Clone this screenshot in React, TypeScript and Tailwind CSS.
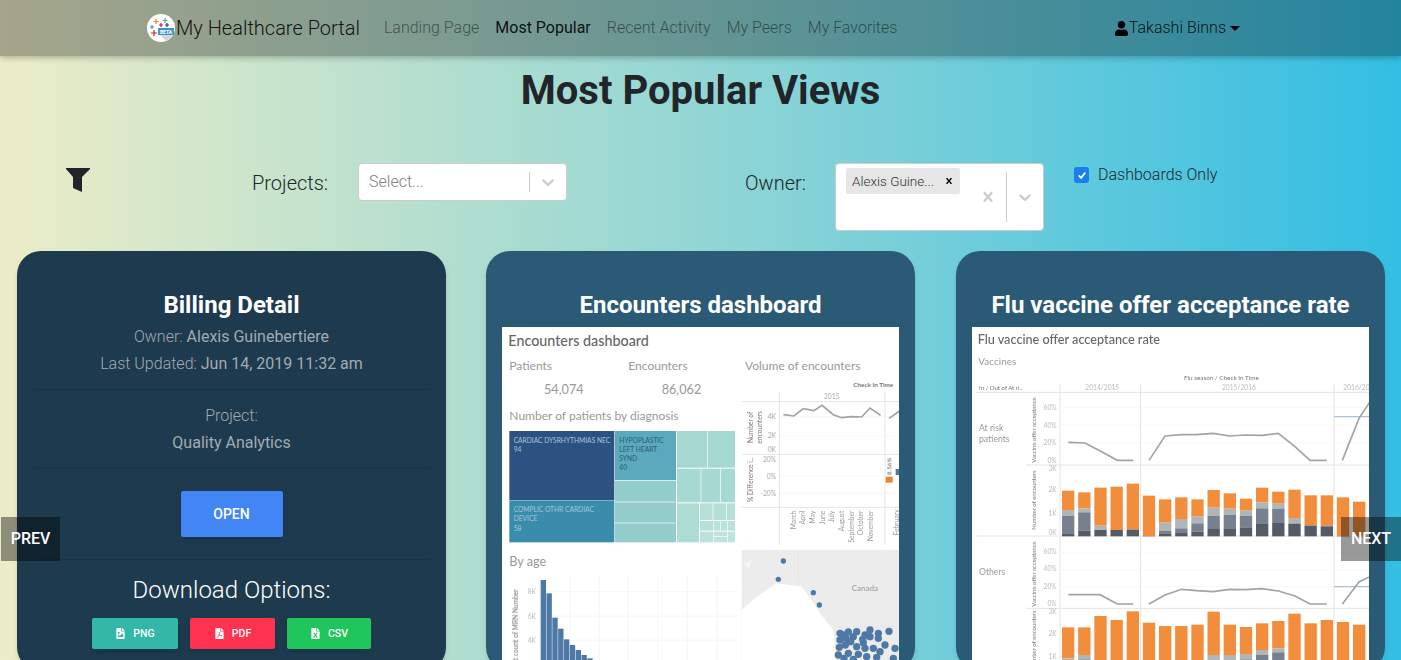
import { FaFileExcel, FaFileImage, FaFilePdf, FaUser } from "react-icons/fa";

const navLinks = ["Landing Page", "Most Popular", "Recent Activity", "My Peers", "My Favorites"];

// charts below are drawn in 3x coordinates, viewBox starts where the thumbnail starts
const treemap = [
  [58, 333, 315, 207, "#2c5282"],
  [58, 541, 315, 126, "#3a8cac"],
  [375, 333, 183, 147, "#5aa9bd"],
  [375, 482, 183, 63, "#92cdcb"],
  [375, 547, 183, 61, "#92cdcb"],
  [375, 610, 183, 57, "#92cdcb"],
  [561, 333, 91, 110, "#a3d7d0"],
  [654, 333, 81, 110, "#a3d7d0"],
  [561, 446, 71, 101, "#a6d9d1"],
  [634, 446, 57, 101, "#a6d9d1"],
  [693, 446, 42, 101, "#a6d9d1"],
  [561, 550, 66, 117, "#addcd3"],
  [630, 550, 38, 50, "#b5e0d6"],
  [670, 550, 38, 50, "#b5e0d6"],
  [710, 550, 25, 50, "#b5e0d6"],
  [630, 603, 40, 29, "#b5e0d6"],
  [672, 603, 18, 29, "#b9e2d8"],
  [692, 603, 20, 29, "#b9e2d8"],
  [714, 603, 21, 29, "#b9e2d8"],
  [630, 635, 40, 32, "#b9e2d8"],
  [672, 635, 40, 13, "#bde4da"],
  [672, 650, 40, 17, "#bde4da"],
  [714, 635, 21, 32, "#bde4da"],
] as const;

const months = ["March", "April", "May", "June", "July", "August", "September", "October", "November"];
const ageBars = [780, 820, 893, 926, 958, 975, 990, 1005, 1015];
const usDots = [
  [1050, 940], [1075, 936], [1100, 935], [1125, 945], [1140, 930], [1165, 940], [1197, 934], [1050, 960],
  [1068, 955], [1090, 950], [1118, 958], [1165, 955], [1048, 982], [1066, 975], [1100, 980], [1125, 985],
  [1150, 985], [1185, 975], [1170, 995], [1215, 985], [1045, 1005], [1075, 1000], [1105, 1003], [1130, 1010],
  [1160, 1012], [1210, 1015], [1062, 1015], [1090, 1018], [1120, 968], [1140, 950], [1060, 945], [1082, 965],
];

// orange top, light grey top, mid grey top, dark top
const riskBars = [
  [512, 570, 587, 640], [517, 565, 577, 632], [503, 617, 630, 630], [500, 630, 630, 630], [491, 628, 628, 630],
  [527, 648, 648, 648], [538, 608, 633, 640], [532, 597, 625, 637], [538, 590, 610, 635], [510, 563, 587, 627],
  [520, 566, 585, 625], [536, 572, 587, 622], [503, 547, 565, 612], [515, 551, 566, 607], [509, 594, 610, 612],
  [526, 616, 616, 617], [526, 617, 617, 619], [532, 648, 648, 648], [545, 648, 648, 648], [540, 648, 648, 648],
];
const otherBars = [
  [922, 1015, 1030], [922, 1005, 1018], [888, 1040, 1040], [900, 1040, 1040], [874, 1040, 1040],
  [908, 1040, 1040], [918, 1040, 1040], [918, 1040, 1040], [914, 1040, 1040], [875, 1005, 1040],
  [914, 1005, 1040], [921, 1002, 1018], [910, 990, 1005], [903, 985, 997], [881, 1040, 1040],
  [910, 1040, 1040], [900, 1040, 1040], [906, 1040, 1040], [914, 1040, 1040], [910, 1040, 1040],
];

const fluLines = [
  "325,367 375,369 425,395 472,421 520,421",
  "567,421 615,348 665,344 710,344 760,340 808,348 858,345 908,346 955,340 1005,380 1050,421 1100,421",
  "1147,421 1197,295 1230,245",
  "325,824 420,824 472,852 520,852",
  "567,852 615,825 665,808 710,812 760,815 808,808 858,809 905,806 955,813 1005,828 1050,852 1100,852",
  "1147,852 1197,786 1230,770",
];

function EncountersChart() {
  return (
    <svg viewBox="36 21 1191 1020" className="block w-[397px] h-[340px] font-['Lato',sans-serif] blur-[0.6px]">
      <rect x="36" y="21" width="1191" height="1020" fill="#fff" />
      <text x="55" y="78" fontSize="43" fontWeight="500" fill="#666">Encounters dashboard</text>
      <g fontSize="36" fill="#999">
        <text x="58" y="151">Patients</text>
        <text x="415" y="151">Encounters</text>
        <text x="765" y="151">Volume of encounters</text>
        <text x="58" y="300">Number of patients by diagnosis</text>
        <text x="58" y="738" fontSize="38">By age</text>
        <text x="162" y="222" fontSize="38">54,074</text>
        <text x="515" y="222" fontSize="38">86,062</text>
      </g>

      {treemap.map(([x, y, w, h, fill]) => (
        <rect key={`${x}-${y}`} x={x} y={y} width={w} height={h} fill={fill} />
      ))}
      <g fontSize="20" fill="#a9c4d6">
        <text x="71" y="368">CARDIAC DYSRHYTHMIAS NEC</text>
        <text x="71" y="395">94</text>
        <text x="71" y="575">COMPLIC OTHR CARDIAC</text>
        <text x="71" y="603">DEVICE</text>
        <text x="71" y="632">58</text>
      </g>
      <g fontSize="20" fill="#2d5d70">
        <text x="388" y="368">HYPOPLASTIC</text>
        <text x="388" y="395">LEFT HEART</text>
        <text x="388" y="424">SYND</text>
        <text x="388" y="451">40</text>
      </g>

      <g stroke="#e4e4e4" strokeWidth="3">
        <path d="M868 215V675M1185 215V675M755 245H1227M755 403H1227M755 562H1227" fill="none" />
      </g>
      <path d="M870 290H1227M870 347H1227M870 468H1227M870 520H1227" stroke="#f3f3f3" strokeWidth="2" fill="none" />
      <text x="1090" y="202" fontSize="19" fontWeight="700" fill="#777">Check In Time</text>
      <text x="1002" y="237" fontSize="20" fill="#aaa">2015</text>
      <polyline points="880,284 912,288 940,266 972,272 996,256 1030,284 1055,293 1085,290 1115,291 1140,264 1172,286" fill="none" stroke="#a3a3a3" strokeWidth="5" />
      <polyline points="1197,295 1230,272" fill="none" stroke="#a3a3a3" strokeWidth="5" />
      <g fontSize="20" fill="#aaa" textAnchor="end">
        <text x="858" y="297">4K</text>
        <text x="858" y="354">2K</text>
        <text x="858" y="397">0K</text>
        <text x="858" y="425">20%</text>
        <text x="858" y="477">0%</text>
        <text x="858" y="529">-20%</text>
      </g>
      <g fontSize="20" fill="#777" textAnchor="middle">
        <text transform="translate(790 322) rotate(-90)">Number of</text>
        <text transform="translate(817 322) rotate(-90)">encounters</text>
        <text transform="translate(790 480) rotate(-90)">% Difference i..</text>
      </g>
      <g fontSize="20" fill="#999" textAnchor="end">
        {months.map((month, i) => (
          <text key={month} transform={`translate(${917 + i * 29} 572) rotate(-90)`}>{month}</text>
        ))}
        <text transform="translate(1226 568) rotate(-90)">February</text>
      </g>
      <rect x="1187" y="470" width="21" height="18" fill="#ea8534" />
      <rect x="1217" y="447" width="12" height="18" fill="#4e79a7" />
      <text transform="translate(1204 465) rotate(-90)" fontSize="19" fill="#666">8.56%</text>

      <path d="M150 765V1040M240 765V1040M328 765V1040M415 765V1040M503 765V1040M592 765V1040M682 765V1040M145 815H745M145 888H745M145 960H745" stroke="#f1f1f1" strokeWidth="2" fill="none" />
      {ageBars.map((top, i) => (
        <rect key={i} x={152 + i * 17.5} y={top} width="16" height={1041 - top} fill="#4e79a7" />
      ))}
      <g fontSize="20" fill="#bbb" textAnchor="end">
        <text x="138" y="823">8K</text>
        <text x="138" y="896">6K</text>
        <text x="138" y="968">4K</text>
      </g>
      <text transform="translate(84 1082) rotate(-90)" fontSize="20" fill="#777">Distinct count of MRN Number</text>

      <rect x="755" y="690" width="472" height="351" fill="#ececec" />
      <path d="M755 870L800 830L860 790L935 800L965 840L990 880L1030 930L1040 1041H755Z" fill="#fff" />
      <path d="M925 690V780M1035 920H1227M1065 880L1130 820" stroke="#e2e2e2" strokeWidth="2" fill="none" />
      <path d="M760 730l25 -10l-8 25z" fill="#f7f7f7" />
      <text x="1085" y="814" fontSize="24" fill="#999">Canada</text>
      {[[880, 723], [865, 778], [970, 818], [988, 855]].map(([cx, cy]) => (
        <circle key={cx} cx={cx} cy={cy} r="8" fill="#4e79a7" />
      ))}
      {usDots.map(([cx, cy], i) => (
        <circle key={i} cx={cx} cy={cy} r="11" fill="#4e79a7" />
      ))}
    </svg>
  );
}

function FluChart() {
  return (
    <svg viewBox="36 21 1191 1020" className="block w-[397px] h-[340px] font-['Lato',sans-serif] blur-[0.6px]">
      <rect x="36" y="21" width="1191" height="1020" fill="#fff" />
      <text x="53" y="71" fontSize="38" fontWeight="500" fill="#666">Flu vaccine offer acceptance rate</text>
      <text x="55" y="135" fontSize="30" fill="#999">Vaccines</text>
      <text x="672" y="179" fontSize="19" fill="#777">Flu season / Check In Time</text>
      <text x="57" y="209" fontSize="18" fill="#777">In / Out of At ri..</text>
      <g fontSize="20" fill="#bbb">
        <text x="376" y="210">2014/2015</text>
        <text x="786" y="210">2015/2016</text>
        <text x="1150" y="210">2016/2017</text>
      </g>

      <path d="M300 190V1041M542 190V1041M1122 190V1041M48 217H1227M198 435H1227M48 648H1227M198 865H1227" stroke="#e4e4e4" strokeWidth="3" fill="none" />
      <path d="M300 262H1227M300 315H1227M300 368H1227M300 700H1227M300 750H1227M300 800H1227" stroke="#f4f4f4" strokeWidth="2" fill="none" />
      <path d="M1122 290H1227M1122 800H1227" stroke="#a9c0d8" strokeWidth="4" fill="none" />
      {fluLines.map((points) => (
        <polyline key={points} points={points} fill="none" stroke="#a3a3a3" strokeWidth="5" />
      ))}

      {riskBars.map(([orange, light, mid, dark], i) => {
        const x = 306 + i * 48.5;
        return (
          <g key={i}>
            <rect x={x} y={orange} width="37" height={light - orange} fill="#f28e3b" />
            <rect x={x} y={light} width="37" height={mid - light} fill="#b0b5b6" />
            <rect x={x} y={mid} width="37" height={dark - mid} fill="#76808e" />
            <rect x={x} y={dark} width="37" height={649 - dark} fill="#555b66" />
          </g>
        );
      })}
      {otherBars.map(([orange, light, mid], i) => {
        const x = 306 + i * 48.5;
        return (
          <g key={i}>
            <rect x={x} y={orange} width="37" height={light - orange} fill="#f28e3b" />
            <rect x={x} y={light} width="37" height={mid - light} fill="#b0b5b6" />
            <rect x={x} y={mid} width="37" height={1041 - mid} fill="#76808e" />
          </g>
        );
      })}

      <g fontSize="26" fill="#999">
        <text x="57" y="333">At risk</text>
        <text x="57" y="366">patients</text>
        <text x="57" y="765">Others</text>
      </g>
      <g fontSize="20" fill="#bbb" textAnchor="end">
        <text x="290" y="270">60%</text>
        <text x="290" y="324">40%</text>
        <text x="290" y="376">20%</text>
        <text x="290" y="428">0%</text>
        <text x="290" y="452">3K</text>
        <text x="290" y="517">2K</text>
        <text x="290" y="587">1K</text>
        <text x="290" y="644">0K</text>
        <text x="290" y="702">60%</text>
        <text x="290" y="754">40%</text>
        <text x="290" y="807">20%</text>
        <text x="290" y="858">0%</text>
        <text x="290" y="883">3K</text>
        <text x="290" y="948">2K</text>
        <text x="290" y="1016">1K</text>
      </g>
      <g fontSize="18" fill="#777" textAnchor="middle">
        <text transform="translate(227 330) rotate(-90)">Vaccine offer acceptance</text>
        <text transform="translate(227 540) rotate(-90)">Number of encounters</text>
        <text transform="translate(227 762) rotate(-90)">Vaccine offer acceptance</text>
        <text transform="translate(227 960) rotate(-90)">Number of encounters</text>
      </g>
    </svg>
  );
}

function Logo() {
  return (
    <svg viewBox="0 0 28 28" className="w-[28px] h-[28px] shrink-0">
      <circle cx="14" cy="14" r="14" fill="#fff" />
      <path d="M13 21L27 14A14 14 0 0 1 19 27Z" fill="#d5d5d5" />
      <g strokeWidth="1.2" fill="none">
        <path d="M9 5V10M6.5 7.5H11.5" stroke="#e8833a" />
        <path d="M18 4V9M15.5 6.5H20.5" stroke="#7099a6" />
        <path d="M14 9V13M12 11H16" stroke="#c72037" />
        <path d="M5 11V15M3 13H7" stroke="#5b879b" />
        <path d="M20 9V13M18 11H22" stroke="#1f447e" />
        <path d="M7 16V22M4 19H10" stroke="#c72037" />
      </g>
      <rect x="11" y="14" width="16" height="7" fill="#3d97c2" />
      <text x="19" y="19.8" textAnchor="middle" fontSize="5" fontWeight="700" fill="#fff">BETA</text>
    </svg>
  );
}

function Chevron() {
  return (
    <svg viewBox="0 0 20 20" className="w-[20px] h-[20px] fill-[#cccccc]">
      <path d="M4.516 7.548c0.436-0.446 1.043-0.481 1.576 0l3.908 3.747 3.908-3.747c0.533-0.481 1.141-0.446 1.574 0 0.436 0.445 0.408 1.197 0 1.615-0.406 0.418-4.695 4.502-4.695 4.502-0.217 0.223-0.502 0.335-0.787 0.335s-0.57-0.112-0.789-0.335c0 0-4.287-4.084-4.695-4.502s-0.436-1.17 0-1.615z" />
    </svg>
  );
}

function Cross({ className }: { className: string }) {
  return (
    <svg viewBox="0 0 20 20" className={className}>
      <path d="M14.348 14.849c-0.469 0.469-1.229 0.469-1.697 0l-2.651-3.030-2.651 3.029c-0.469 0.469-1.229 0.469-1.697 0-0.469-0.469-0.469-1.229 0-1.697l2.758-3.15-2.759-3.152c-0.469-0.469-0.469-1.228 0-1.697s1.228-0.469 1.697 0l2.652 3.031 2.651-3.031c0.469-0.469 1.228-0.469 1.697 0s0.469 1.229 0 1.697l-2.758 3.152 2.758 3.15c0.469 0.469 0.469 1.229 0 1.698z" />
    </svg>
  );
}

function Divider({ className = "" }: { className?: string }) {
  return <div className={`h-px bg-black/10 ${className}`} />;
}

function DownloadButton({ label, color, icon }: { label: string; color: string; icon: React.ReactNode }) {
  return (
    <button type="button" className={`h-[31px] flex items-center justify-center gap-[7px] rounded-[2px] text-white text-[10.5px] font-medium shadow-md ${color}`}>
      {icon}
      {label}
    </button>
  );
}

function BillingCard() {
  return (
    <div className="h-[420px] bg-[#1d3a4f] rounded-[24px] px-[16px] pt-[40px] text-center text-[#a3abb1] text-[16px] shadow-md">
      <h3 className="text-[24px] leading-[29px] font-bold text-white">Billing Detail</h3>
      <p className="mt-[3px] leading-[27px] font-light">
        Owner: <span className="font-normal">Alexis Guinebertiere</span>
      </p>
      <p className="leading-[27px] font-light">
        Last Updated: <span className="font-normal">Jun 14, 2019 11:32 am</span>
      </p>
      <Divider className="mt-[12px]" />
      <p className="mt-[12px] leading-[27px] font-light">Project:</p>
      <p className="leading-[27px]">Quality Analytics</p>
      <Divider className="mt-[12px]" />
      <button type="button" className="mt-[22px] w-[102px] h-[46px] bg-[#4285f4] rounded-[2px] text-white text-[14px] font-medium shadow-md">
        OPEN
      </button>
      <Divider className="mt-[22px]" />
      <h4 className="mt-[16px] text-[24px] leading-[29px] font-light text-white">Download Options:</h4>
      <div className="mt-[13px] mx-auto w-[279px] grid grid-cols-[86px_85px_84px] gap-[12px]">
        <DownloadButton label="PNG" color="bg-[#33b8a8]" icon={<FaFileImage className="text-[11px]" />} />
        <DownloadButton label="PDF" color="bg-[#ff3350]" icon={<FaFilePdf className="text-[11px]" />} />
        <DownloadButton label="CSV" color="bg-[#1fc65b]" icon={<FaFileExcel className="text-[11px]" />} />
      </div>
    </div>
  );
}

function ThumbCard({ title, children }: { title: string; children: React.ReactNode }) {
  return (
    <div className="w-[429px] h-[420px] bg-[#2b5a76] rounded-[24px] px-[16px] pt-[40px] shadow-md">
      <h3 className="text-[24px] leading-[29px] font-bold text-white text-center whitespace-nowrap mb-[7px]">{title}</h3>
      {children}
    </div>
  );
}

export default function App() {
  return (
    <div className="relative h-[660px] overflow-hidden font-['Roboto',sans-serif] text-[#212529] bg-[linear-gradient(90deg,#ecedc7_0%,#92d6d4_50%,#33bee3_100%)]">
      <nav className="h-[56px] flex items-center pl-[147px] bg-black/30 shadow-[0_2px_6px_rgba(0,0,0,0.25)]">
        <a className="flex items-center text-[20px] font-light text-black/90 mr-[16px]">
          <Logo />
          <span className="ml-[1px]">My Healthcare Portal</span>
        </a>
        <ul className="flex">
          {navLinks.map((link) => (
            <li key={link} className={`px-[8px] text-[16px] font-light ${link === "Most Popular" ? "text-black/90 font-normal" : "text-black/50"}`}>
              {link}
            </li>
          ))}
        </ul>
        <div className="ml-auto mr-[161px] flex items-center text-[16px] font-light text-black/90">
          <FaUser className="text-[15px] text-black" />
          <span>Takashi Binns</span>
          <span className="ml-[4px] border-x-[5px] border-t-[5px] border-x-transparent border-t-black" />
        </div>
      </nav>

      <h1 className="mt-[11px] text-center text-[40px] leading-[48px] font-bold">Most Popular Views</h1>

      <div className="mt-[48px] flex items-start h-[68px] pl-[66px]">
        <svg viewBox="0 0 24 24" className="mt-[5px] w-[24px] h-[24px] fill-[#212529]">
          <path d="M0 0H24V1L16 9V24L7 20V9L0 1Z" />
        </svg>
        <label className="ml-[162px] h-[38px] mt-[1px] flex items-center text-[20px] font-light">Projects:</label>
        <div className="ml-[30px] w-[209px] h-[38px] flex items-center bg-white rounded-[4px] border border-[#cccccc] pl-[10px]">
          <span className="flex-1 text-[16px] font-light text-[#808080]">Select...</span>
          <span className="w-px h-[20px] bg-[#cccccc]" />
          <span className="px-[8px]"><Chevron /></span>
        </div>
        <label className="ml-[178px] h-[38px] mt-[1px] flex items-center text-[20px] font-light">Owner:</label>
        <div className="ml-[29px] w-[209px] h-[68px] flex bg-white rounded-[4px] border border-[#cccccc] pl-[10px]">
          <div className="flex-1 pt-[4px]">
            <div className="w-[114px] h-[26px] flex items-center justify-between bg-[#e6e6e6] rounded-[2px] pl-[6px] pr-[5px] text-[13.5px] font-light text-[#333333]">
              <span>Alexis Guine...</span>
              <Cross className="w-[12px] h-[12px] fill-black" />
            </div>
          </div>
          <div className="flex items-center">
            <Cross className="w-[20px] h-[20px] fill-[#cccccc] mr-[8px]" />
            <span className="w-px h-[50px] bg-[#cccccc]" />
            <span className="px-[8px]"><Chevron /></span>
          </div>
        </div>
        <label className="ml-[30px] flex items-center text-[16px] font-light leading-[24px]">
          <span className="w-[15px] h-[16px] mr-[9px] mt-[-1px] flex items-center justify-center rounded-[3px] bg-[#1a7ff0]">
            <svg viewBox="0 0 12 12" className="w-[10px] h-[10px] fill-none stroke-white stroke-[2.2]">
              <path d="M2 6.5L5 9.5L10 3" />
            </svg>
          </span>
          Dashboards Only
        </label>
      </div>

      <div className="mt-[20px] grid grid-cols-[429px_430px_429px] gap-[40px] pl-[17px]">
        <BillingCard />
        <ThumbCard title="Encounters dashboard"><EncountersChart /></ThumbCard>
        <ThumbCard title="Flu vaccine offer acceptance rate"><FluChart /></ThumbCard>
      </div>

      <button type="button" className="absolute left-[1px] top-[517px] w-[59px] h-[44px] bg-black/40 text-white text-[16px] font-medium">
        PREV
      </button>
      <button type="button" className="absolute right-0 top-[517px] w-[60px] h-[44px] bg-black/40 text-white text-[16px] font-medium">
        NEXT
      </button>
    </div>
  );
}
